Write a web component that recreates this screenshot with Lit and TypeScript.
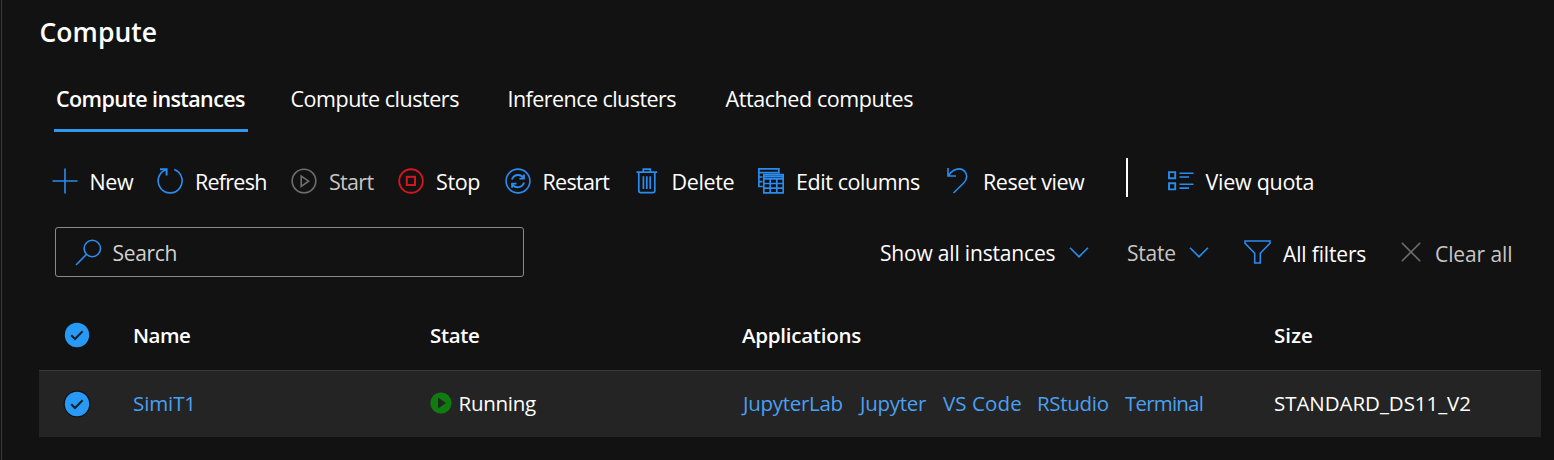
import { LitElement, html, svg, css } from "lit";
import { customElement, property } from "lit/decorators.js";

const ICONS: Record<string, unknown> = {
  add: svg`<path d="M13 .5v25M.5 13h25"/>`,
  refresh: svg`<path d="M17.200 1.600A12 12 0 1 1 8.800 1.700"/><path d="M3 1.200h6.600v6.200" stroke-width="2"/>`,
  start: svg`<circle cx="13" cy="13" r="11.8"/><path d="M10.2 8v10.4l7.4-5.2z"/>`,
  stop: svg`<circle cx="13" cy="13" r="11.8" stroke-width="1.9"/><rect x="8.8" y="8.8" width="8.2" height="8.2" stroke-width="2"/>`,
  restart: svg`<circle cx="13" cy="13" r="11.9"/><path d="M7 11.6a6.4 6.4 0 0 1 11.6-1.6M19 14.6A6.4 6.4 0 0 1 7.4 16.2" stroke-width="1.9"/><path d="M18.9 6.4v4.2h-4.4M7.1 19.8v-4.2h4.4" stroke-width="1.9"/>`,
  delete: svg`<path d="M.5 4.2h20.6M7.3 4V1.2h7V4M2.8 4.2v18.6q0 1.8 1.8 1.8h12.4q1.8 0 1.8-1.8V4.2M7.4 8.3v12.6M10.8 8.3v12.6M14.2 8.3v12.6" stroke-width="1.7"/>`,
  columns: svg`<path d="M4.8 18.5H.9V.9h20v4.8M1 4.6h19.5M1 9h3.5M1 13.6h3.5" stroke-width="1.7"/><path d="M5.8 6.6h19.4v18.2H5.8zM5.8 10.9h19.4M5.8 15.5h19.4M5.8 20.1h19.4M12.2 10.9v13.9M18.8 10.9v13.9M6 8.7h19" stroke-width="1.7"/>`,
  reset: svg`<path d="M1 0v8h8M1.4 7.4C5 2.6 9 .9 12 .9c4.400 0 7.700 3.300 7.700 7.600 0 2.700-1.200 4.700-3 6.500L6.500 25"/>`,
  quota: svg`<path d="M1 4.100h6.200v6.200H1zM1 15.200h6.200v6.200H1z" stroke-width="1.900"/><path d="M11.500 5.200h14M11.500 9h9.500M11.500 16.300h14M11.500 20.100h9.500" stroke-width="1.600"/>`,
};

/** A single-line label with its own tracking. */
const label = (text: string, track = 0, cls = "") =>
  html`<span class="label ${cls}" style="letter-spacing:${track}px">${text}</span>`;

const base = css`
  * { box-sizing: border-box; }
  svg { display: block; flex: none; fill: none; stroke: #2a8cf0; stroke-width: 1.6; }
  .label { white-space: pre; }
`;

@customElement("command-bar")
export class CommandBar extends LitElement {
  static styles = [base, css`
    :host { display: grid; height: 47px; padding-left: 49.500px; align-items: center;
      grid-template-columns: 105.500px 134px 107px 106.500px 131px 122.500px 189px 178.500px 42px 1fr;
      font-size: 21.5px; }
    .item { display: flex; align-items: center; height: 47px; color: #fff; }
    .item svg { margin: -2px 12px 0 0; }
    .item.narrow svg { margin-right: 14px; }
    .disabled { color: #c8c6c4; }
    .disabled svg { stroke: #6e6e6e; }
    .stop svg { stroke: #d5161f; }
    .divider { width: 2px; height: 39px; align-self: start; background: #fff; }
  `];
  item(icon: string, w: number, text: string, track: number, cls = "") {
    return html`<div class="item ${cls}">
      <svg width=${w} height="26" viewBox="0 0 ${w} 26">${ICONS[icon]}</svg>${label(text, track)}
    </div>`;
  }
  render() {
    return html`
      ${this.item("add", 26, "New", -0.4)}
      ${this.item("refresh", 26, "Refresh", -0.75)}
      ${this.item("start", 26, "Start", -0.7, "disabled")}
      ${this.item("stop", 26, "Stop", -0.4, "stop")}
      ${this.item("restart", 26, "Restart", -0.7)}
      ${this.item("delete", 22, "Delete", -0.35, "narrow")}
      ${this.item("columns", 26, "Edit columns", -0.43)}
      ${this.item("reset", 22, "Reset view", -0.46, "narrow")}
      <div class="divider"></div>
      ${this.item("quota", 26, "View quota", -0.28)}
    `;
  }
}

@customElement("check-mark")
export class CheckMark extends LitElement {
  @property({ type: Boolean }) ringed = false;
  static styles = [base, css`
    :host { display: block; }
    svg { stroke: none; }
  `];
  render() {
    return html`<svg width="28" height="28" viewBox="0 0 28 28">
      <circle cx="14" cy="14" r="13.4" fill=${this.ringed ? "#0c1219" : "none"} />
      <circle cx="14" cy="14" r="12.2" fill="#2899f5" />
      <path d="M8.200 14.200l3.800 3.800 7.600-7.800" stroke="#10202c" stroke-width="2" fill="none" />
    </svg>`;
  }
}

@customElement("app-root")
export class AppRoot extends LitElement {
  static styles = [base, css`
    :host { display: block; height: 460px; overflow: hidden; background: #121212; color: #fff;
      font-family: "Open Sans", "Noto Sans", sans-serif; font-size: 21px; }
    .page { height: 460px; margin-left: 1px; border-left: 1px solid #3a3a3a; }
    h1 { height: 61px; margin: 0; padding: 2px 0 0 37.500px; font-size: 26.5px; font-weight: 600; line-height: 61px; }
    .tabs { display: grid; grid-template-columns: 235.500px 217px 218px 1fr; height: 71px;
      padding-left: 52px; font-size: 21.5px; }
    .tab { padding: 18px 0 0 1px; line-height: 40px; }
    .active { width: 194px; padding-left: 2px; border-bottom: 3px solid #3298ee; font-weight: 600; }
    command-bar { margin-top: 26px; }
    .filters { display: flex; align-items: center; height: 50px; margin-top: 22px; }
    .search { display: flex; align-items: center; width: 469px; height: 50px; margin-left: 53px;
      padding-left: 19px; border: 1px solid #8a8a8a; border-radius: 3px; color: #d2d0ce; }
    .search svg { margin-right: 10.500px; }
    .filters .label { padding-top: 2px; }
    .drop { display: flex; align-items: center; }
    .muted { color: #c8c6c4; }
    .all { width: 247px; margin-left: 356px; }
    .all .label { width: 188.500px; }
    .state { width: 117px; }
    .state .label { width: 61.500px; }
    .drop.all svg, .drop.state svg { margin-top: 1px; }
    .funnel { width: 156.500px; }
    .funnel svg { margin-right: 12px; }
    .funnel .label, .clear .label { padding-top: 4px; }
    .clear svg { margin-right: 14.500px; stroke: #6e6e6e; }
    .grid { display: grid; grid-template-columns: 94px 297px 312px 532px 1fr; align-items: center;
      margin: 0 13px 0 37px; font-size: 20.5px; }
    .head { height: 70px; margin-top: 23px; font-weight: 600; }
    .row { height: 67px; background: #242424; border-top: 1px solid #393939; }
    .row .label { padding-bottom: 2px; }
    check-mark { margin-left: 23.500px; }
    .status { display: flex; align-items: center; }
    .status svg { margin: -3px 7px 0 -.5px; stroke: none; }
    .apps { display: grid; grid-template-columns: 117px 83px 94px 88px 1fr; padding-left: 1px; }
    .link { color: #4aa0f2; }
  `];
  render() {
    const chevron = html`<svg width="20" height="11" viewBox="0 0 20 11"><path d="M1 .8l9 9 9-9" /></svg>`;
    return html`<div class="page">
      <h1>${label("Compute", 0.05)}</h1>
      <div class="tabs">
        <div class="tab active">${label("Compute instances", -0.6)}</div>
        <div class="tab">${label("Compute clusters", -0.47)}</div>
        <div class="tab">${label("Inference clusters", -0.55)}</div>
        <div class="tab">${label("Attached computes", -0.42)}</div>
      </div>
      <command-bar></command-bar>
      <div class="filters">
        <div class="search">
          <svg width="27" height="27" viewBox="0 0 27 27"><circle cx="17.300" cy="9.500" r="8.200" /><path d="M11.400 15.400L1 26" /></svg>
          ${label("Search", -0.3)}
        </div>
        <div class="drop all">${label("Show all instances", -0.18)}${chevron}</div>
        <div class="drop state muted">${label("State", -0.2)}${chevron}</div>
        <div class="drop funnel">
          <svg width="27" height="24" viewBox="0 0 27 24"><path d="M1 1h25v2.200l-9.700 10V23h-5.600v-9.800L1 3.200z" /></svg>
          ${label("All filters", -0.15)}
        </div>
        <div class="drop clear muted">
          <svg width="20" height="20" viewBox="0 0 20 20"><path d="M.8 .8l18.400 18.400M19.200 .8L.8 19.200" /></svg>
          ${label("Clear all", -0.1)}
        </div>
      </div>
      <div class="grid head">
        <check-mark></check-mark>
        ${label("Name", -0.5)}${label("State", -0.34)}${label("Applications", -0.25)}${label("Size", 0.1)}
      </div>
      <div class="grid row">
        <check-mark ringed></check-mark>
        ${label("SimiT1", -0.1, "link")}
        <div class="status">
          <svg width="22" height="22" viewBox="0 0 22 22"><circle cx="11" cy="11" r="10.600" fill="#107c10" /><path d="M8 5.500v11l8-5.500z" fill="#1d2b1d" /></svg>
          ${label("Running", -0.25)}
        </div>
        <div class="apps">
          ${label("JupyterLab", -0.3, "link")}${label("Jupyter", -0.3, "link")}${label("VS Code", 0.1, "link")}${label("RStudio", -0.3, "link")}${label("Terminal", -0.8, "link")}
        </div>
        ${label("STANDARD_DS11_V2", -0.05)}
      </div>
    </div>`;
  }
}
